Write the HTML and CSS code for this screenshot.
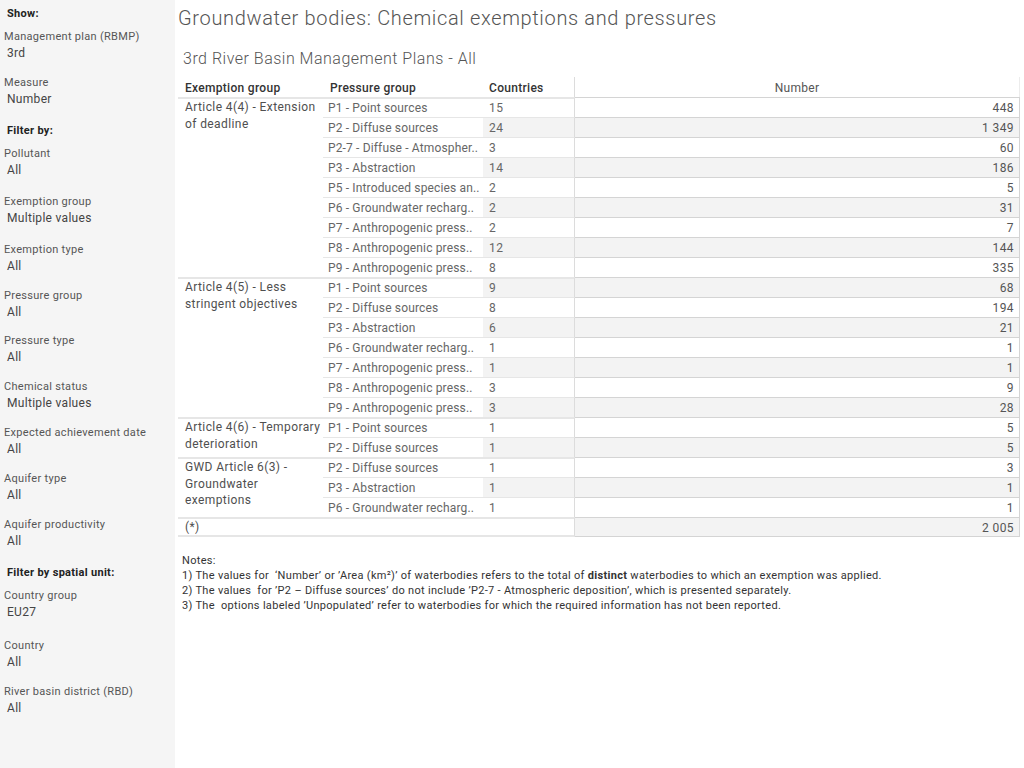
FILE: index.html
```html
<!DOCTYPE html>
<html lang="en">
<head>
<meta charset="utf-8">
<title>Groundwater bodies: Chemical exemptions and pressures</title>
<link rel="stylesheet" href="styles.css">
</head>
<body>
<div class="page">
  <aside class="sidebar">
    <div class="heading first">Show:</div>
    <div class="filter top8"><div class="label">Management plan (RBMP)</div><div class="value">3rd</div></div>
    <div class="filter"><div class="label">Measure</div><div class="value">Number</div></div>
    <div class="heading">Filter by:</div>
    <div class="filter top7"><div class="label">Pollutant</div><div class="value">All</div></div>
    <div class="filter gap16"><div class="label">Exemption group</div><div class="value">Multiple values</div></div>
    <div class="filter gap16"><div class="label">Exemption type</div><div class="value">All</div></div>
    <div class="filter"><div class="label">Pressure group</div><div class="value">All</div></div>
    <div class="filter gap13"><div class="label">Pressure type</div><div class="value">All</div></div>
    <div class="filter"><div class="label">Chemical status</div><div class="value">Multiple values</div></div>
    <div class="filter"><div class="label">Expected achievement date</div><div class="value">All</div></div>
    <div class="filter"><div class="label">Aquifer type</div><div class="value">All</div></div>
    <div class="filter"><div class="label">Aquifer productivity</div><div class="value">All</div></div>
    <div class="heading">Filter by spatial unit:</div>
    <div class="filter top7"><div class="label">Country group</div><div class="value">EU27</div></div>
    <div class="filter gap18"><div class="label">Country</div><div class="value">All</div></div>
    <div class="filter"><div class="label">River basin district (RBD)</div><div class="value">All</div></div>
  </aside>

  <main class="main">
    <h1 class="title">Groundwater bodies: Chemical exemptions and pressures</h1>
    <h2 class="subtitle">3rd River Basin Management Plans - All</h2>

    <div class="table">
      <div class="hd">Exemption group</div>
      <div class="hd">Pressure group</div>
      <div class="hd hd-c">Countries</div>
      <div class="hd hd-n">Number</div>

      <div class="ex" style="grid-row: span 9">Article 4(4) - Extension of deadline</div>
      <div class="p gt">P1 - Point sources</div><div class="c gt">15</div><div class="n">448</div>
      <div class="p">P2 - Diffuse sources</div><div class="c band">24</div><div class="n band">1 349</div>
      <div class="p">P2-7 - Diffuse - Atmospher..</div><div class="c">3</div><div class="n">60</div>
      <div class="p">P3 - Abstraction</div><div class="c band">14</div><div class="n band">186</div>
      <div class="p">P5 - Introduced species an..</div><div class="c">2</div><div class="n">5</div>
      <div class="p">P6 - Groundwater recharg..</div><div class="c band">2</div><div class="n band">31</div>
      <div class="p">P7 - Anthropogenic press..</div><div class="c">2</div><div class="n">7</div>
      <div class="p">P8 - Anthropogenic press..</div><div class="c band">12</div><div class="n band">144</div>
      <div class="p">P9 - Anthropogenic press..</div><div class="c">8</div><div class="n">335</div>

      <div class="ex" style="grid-row: span 7">Article 4(5) - Less stringent objectives</div>
      <div class="p gt">P1 - Point sources</div><div class="c gt band">9</div><div class="n band">68</div>
      <div class="p">P2 - Diffuse sources</div><div class="c">8</div><div class="n">194</div>
      <div class="p">P3 - Abstraction</div><div class="c band">6</div><div class="n band">21</div>
      <div class="p">P6 - Groundwater recharg..</div><div class="c">1</div><div class="n">1</div>
      <div class="p">P7 - Anthropogenic press..</div><div class="c band">1</div><div class="n band">1</div>
      <div class="p">P8 - Anthropogenic press..</div><div class="c">3</div><div class="n">9</div>
      <div class="p">P9 - Anthropogenic press..</div><div class="c band">3</div><div class="n band">28</div>

      <div class="ex" style="grid-row: span 2">Article 4(6) - Temporary deterioration</div>
      <div class="p gt">P1 - Point sources</div><div class="c gt">1</div><div class="n">5</div>
      <div class="p">P2 - Diffuse sources</div><div class="c band">1</div><div class="n band">5</div>

      <div class="ex" style="grid-row: span 3">GWD Article 6(3) - Groundwater exemptions</div>
      <div class="p gt">P2 - Diffuse sources</div><div class="c gt">1</div><div class="n">3</div>
      <div class="p">P3 - Abstraction</div><div class="c band">1</div><div class="n band">1</div>
      <div class="p">P6 - Groundwater recharg..</div><div class="c">1</div><div class="n">1</div>

      <div class="ex total">(*)</div>
      <div class="p gt total"></div><div class="c gt total"></div><div class="n band last">2 005</div>
    </div>

    <div class="notes">
      <p>Notes:</p>
      <p>1) The values for&nbsp; ‘Number’ or ’Area (km²)’ of waterbodies refers to the total of <b>distinct</b> waterbodies to which an exemption was applied.</p>
      <p>2) The values&nbsp; for ’P2 – Diffuse sources’ do not include ’P2-7 - Atmospheric deposition’, which is presented separately.</p>
      <p>3) The&nbsp; options labeled ’Unpopulated’ refer to waterbodies for which the required information has not been reported.</p>
    </div>
  </main>
</div>
</body>
</html>
```

FILE: styles.css
```css
* { box-sizing: border-box; }

html, body {
  margin: 0;
  padding: 0;
  background: #ffffff;
  font-family: Roboto, "Liberation Sans", sans-serif;
}

.page {
  display: flex;
  width: 1024px;
  min-height: 768px;
}

/* ---------- sidebar ---------- */
.sidebar {
  width: 175px;
  flex: 0 0 175px;
  background: #f5f5f5;
  min-height: 768px;
  padding-left: 4px;
  padding-top: 1px;
  letter-spacing: 0.3px;
}

.heading {
  font-size: 11px;
  font-weight: 700;
  color: #222;
  line-height: 16px;
  padding-left: 3px;
  margin-top: 16px;
}
.heading.first { margin-top: 5px; }

.filter { margin-top: 14px; }
.filter.top8 { margin-top: 7px; }
.filter.top7 { margin-top: 7px; }
.filter.gap16 { margin-top: 16px; }
.filter.gap13 { margin-top: 13px; }
.filter.gap18 { margin-top: 18px; }

.label {
  font-size: 11px;
  line-height: 16px;
  color: #555;
  white-space: nowrap;
}
.value {
  font-size: 12px;
  line-height: 16px;
  color: #444;
  padding-left: 3px;
  white-space: nowrap;
}

/* ---------- main ---------- */
.main {
  flex: 1;
  padding-left: 3px;
  padding-top: 5px;
}

.title {
  margin: 0;
  font-size: 20px;
  line-height: 26px;
  font-weight: 300;
  color: #555;
  letter-spacing: 0.65px;
}

.subtitle {
  margin: 18px 0 0 5px;
  font-size: 16px;
  line-height: 20px;
  font-weight: 300;
  color: #555;
  letter-spacing: 0.5px;
}

.table {
  margin-top: 8px;
  display: grid;
  grid-template-columns: 145px 160px 92px 445px;
  grid-auto-rows: 20px;
  font-size: 12px;
  color: #666;
  letter-spacing: 0.4px;
}

.table > div {
  line-height: 18px;
  white-space: nowrap;
  overflow: hidden;
}

.hd {
  font-weight: 500;
  color: #333;
  padding-left: 7px;
  padding-top: 2px;
  letter-spacing: 0.3px;
}
.hd-c {
  padding-left: 6px;
  border-right: 1px solid #dcdcdc;
}
.hd-n {
  text-align: center;
  font-weight: 400;
  color: #555;
  padding-left: 0;
  border-right: 1px solid #ececec;
}

.ex {
  border-top: 2px solid #e6e6e6;
  padding: 0 1px 0 7px;
  color: #4f4f4f;
  white-space: normal !important;
  line-height: 16.5px !important;
}

.p {
  padding-left: 5px;
  padding-top: 1px;
  border-top: 1px solid #e6e6e6;
  letter-spacing: 0.15px;
}
.c {
  padding-left: 6px;
  padding-top: 1px;
  border-top: 1px solid #e6e6e6;
  border-right: 1px solid #dcdcdc;
}
.gt {
  border-top: 2px solid #e6e6e6;
  padding-top: 0;
}

.n {
  text-align: right;
  padding-right: 5px;
  padding-top: 1px;
  color: #555;
  border-top: 1px solid #d4d4d4;
  border-right: 1px solid #d4d4d4;
}
.n.last { border-bottom: 1px solid #d4d4d4; }

.band { background: #f3f3f3; }

.total { border-bottom: 2px solid #e6e6e6; }

/* ---------- notes ---------- */
.notes {
  margin-top: 16px;
  padding-left: 4px;
  font-size: 11px;
  line-height: 15px;
  color: #333;
  letter-spacing: 0.31px;
}
.notes p { margin: 0; }
.notes b { font-weight: 700; }
```
